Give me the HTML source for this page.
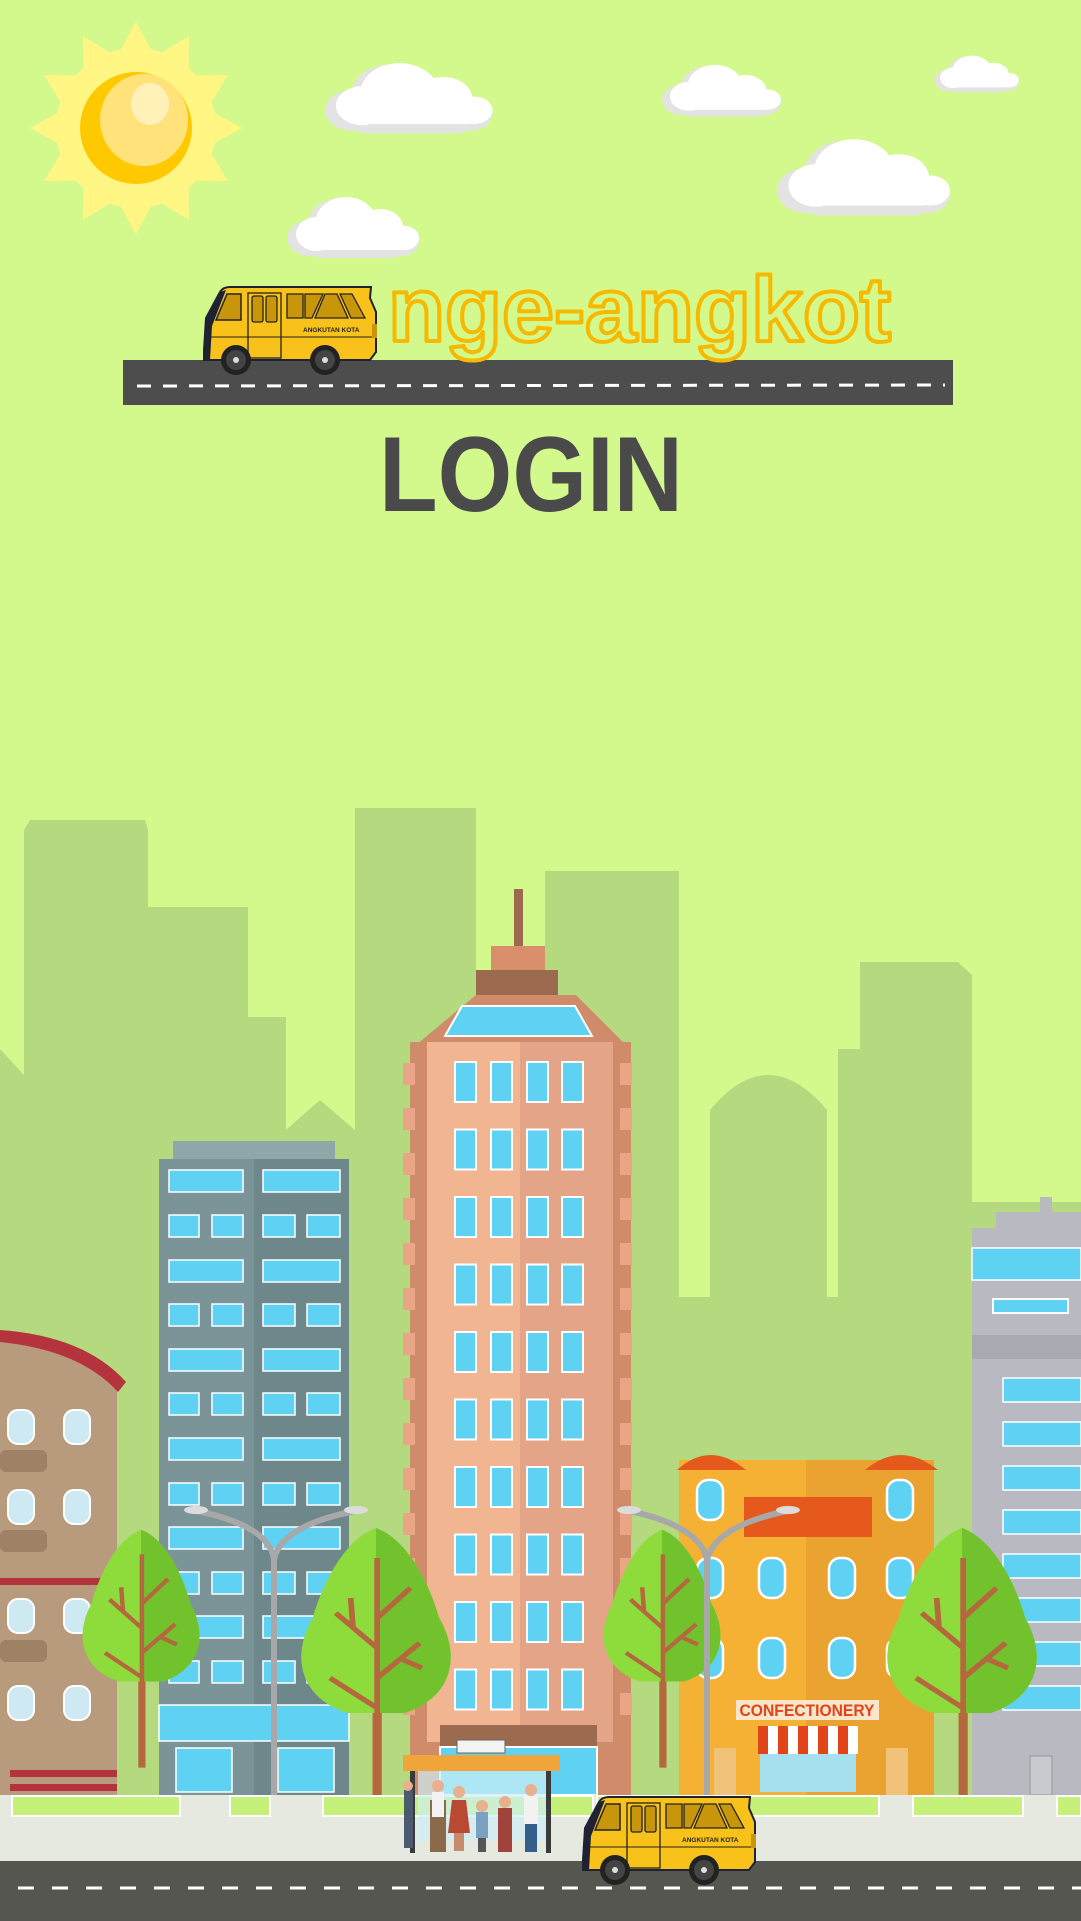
<!DOCTYPE html>
<html><head><meta charset="utf-8"><style>
html,body{margin:0;padding:0;background:#d3f98d;}
svg{display:block}
</style></head><body>
<svg width="1081" height="1921" viewBox="0 0 1081 1921" xmlns="http://www.w3.org/2000/svg">
<defs>
<g id="van">
  <path d="M4,64 L6,32 L20,6 Q23,1 30,1 L171,1 L170,12 L176,26 L176,66 L170,74 L4,74 Z" fill="#f8c21b" stroke="#1f2233" stroke-width="2"/>
  <path d="M4,64 L6,32 L20,6 L26,4 L12,40 L10,74 L4,74Z" fill="#1f2233"/>
  <path d="M16,34 L27,8 L41,8 L41,34 Z" fill="#c7960a" stroke="#222" stroke-width="1.5"/>
  <rect x="48" y="7" width="33" height="65" fill="none" stroke="#222" stroke-width="1.3"/>
  <rect x="52" y="10" width="11" height="26" rx="2" fill="#c7960a" stroke="#222" stroke-width="1.3"/>
  <rect x="66" y="10" width="11" height="26" rx="2" fill="#c7960a" stroke="#222" stroke-width="1.3"/>
  <path d="M87,8 L103,8 L103,32 L87,32Z M105,8 L123,8 L112,32 L105,32Z M125,8 L137,8 L148,32 L115,32Z M140,8 L152,8 L165,32 L151,32Z" fill="#c7960a" stroke="#222" stroke-width="1.3"/>
  <text x="103" y="46" font-family="Liberation Sans, sans-serif" font-size="6.5" font-weight="bold" fill="#222">ANGKUTAN KOTA</text>
  <line x1="6" y1="51" x2="172" y2="51" stroke="#222" stroke-width="1"/>
  <rect x="172" y="38" width="5" height="14" fill="#c7960a"/>
  <circle cx="36" cy="74" r="15" fill="#222"/><circle cx="36" cy="74" r="10" fill="#444"/><circle cx="36" cy="74" r="3" fill="#ddd"/>
  <circle cx="125" cy="74" r="15" fill="#222"/><circle cx="125" cy="74" r="10" fill="#444"/><circle cx="125" cy="74" r="3" fill="#ddd"/>
</g>
<g id="cloud">
  <g fill="#e3e3e3"><circle cx="20" cy="42" r="18"/><circle cx="45" cy="28" r="26"/><circle cx="75" cy="36" r="20"/><circle cx="95" cy="45" r="15"/><rect x="18" y="40" width="80" height="22" rx="11"/></g>
  <g fill="#fff"><circle cx="26" cy="38" r="17"/><circle cx="50" cy="26" r="25"/><circle cx="78" cy="32" r="19"/><circle cx="98" cy="42" r="12"/><rect x="24" y="36" width="78" height="18" rx="9"/></g>
</g>
<g id="tree">
  <path d="M0,-110 C25,-100 45,-60 55,-20 C75,20 65,60 25,75 L-25,75 C-65,60 -75,20 -55,-20 C-45,-60 -25,-100 0,-110Z" fill="#8ddc3c"/>
  <path d="M0,-110 C25,-100 45,-60 55,-20 C75,20 65,60 25,75 L0,75Z" fill="#72c22e"/>
  <path d="M-3,75 L-3,180 L5,180 L5,75 Z" fill="#b5683e"/>
  <path d="M1,-80 L1,130 M1,10 L-35,-25 M1,40 L38,5 M1,-20 L30,-50 M1,70 L-40,40 M-20,-10 L-22,-40 M20,20 L40,30" stroke="#b5683e" stroke-width="5" fill="none"/>
</g>
</defs>

<rect width="1081" height="1921" fill="#d3f98d"/>

<g transform="translate(136,128)">
  <g fill="#fff683">
    <circle r="80"/>
    <g id="ray"><path d="M-20,-70 L0,-106 L20,-70Z"/></g>
    <use href="#ray" transform="rotate(30)"/><use href="#ray" transform="rotate(60)"/><use href="#ray" transform="rotate(90)"/>
    <use href="#ray" transform="rotate(120)"/><use href="#ray" transform="rotate(150)"/><use href="#ray" transform="rotate(180)"/>
    <use href="#ray" transform="rotate(210)"/><use href="#ray" transform="rotate(240)"/><use href="#ray" transform="rotate(270)"/>
    <use href="#ray" transform="rotate(300)"/><use href="#ray" transform="rotate(330)"/>
  </g>
  <ellipse rx="56" ry="56" fill="#ffc900"/>
  <ellipse cx="8" cy="-8" rx="44" ry="46" fill="#ffe27a"/>
  <ellipse cx="14" cy="-24" rx="19" ry="21" fill="#fff1b8"/>
</g>

<use href="#cloud" transform="translate(322,62) scale(1.55,1.15)"/>
<use href="#cloud" transform="translate(660,64) scale(1.1,0.85)"/>
<use href="#cloud" transform="translate(933,55) scale(0.78,0.6)"/>
<use href="#cloud" transform="translate(774,138) scale(1.6,1.25)"/>
<use href="#cloud" transform="translate(285,196) scale(1.22,1.0)"/>

<rect x="123" y="360" width="830" height="45" fill="#4d4d4d"/>
<line x1="137" y1="386" x2="945" y2="385" stroke="#fff" stroke-width="3" stroke-dasharray="14,12"/>
<use href="#van" transform="translate(200,286)"/>
<text x="388" y="341" font-family="Liberation Sans, sans-serif" font-size="92" font-weight="bold" fill="none" stroke="#f7b900" stroke-width="4" stroke-linejoin="round" textLength="503" lengthAdjust="spacingAndGlyphs">nge-angkot</text>
<text x="379" y="511" font-family="Liberation Sans, sans-serif" font-size="107" font-weight="bold" fill="#4a4a4a" textLength="304" lengthAdjust="spacingAndGlyphs">LOGIN</text>

<g fill="#b5d97e">
  <path d="M0,1049 L24,1075 L24,830 L30,820 L145,820 L148,830 L148,907 L248,907 L248,1017 L286,1017 L286,1130 L320,1100 L355,1130 L355,808 L476,808 L476,1000 L545,1000 L545,871 L679,871 L679,1297 L710,1297 L710,1110 Q768,1040 827,1110 L827,1297 L838,1297 L838,1049 L860,1049 L860,962 L958,962 L972,975 L972,1202 L1081,1202 L1081,1800 L0,1800Z"/>
</g>

<path d="M0,1333 Q80,1340 122,1383 L117,1390 L117,1795 L0,1795Z" fill="#b89a7c"/>
<path d="M0,1330 Q85,1336 126,1382 L118,1392 Q80,1350 0,1342Z" fill="#b5333c"/>
<rect x="0" y="1578" width="117" height="7" fill="#b5333c"/>
<rect x="10" y="1770" width="107" height="7" fill="#b5333c"/><rect x="10" y="1784" width="107" height="7" fill="#b5333c"/>
<g fill="#cfe9f3" stroke="#fff" stroke-width="2">
  <rect x="8" y="1410" width="26" height="34" rx="10"/><rect x="64" y="1410" width="26" height="34" rx="10"/>
  <rect x="8" y="1490" width="26" height="34" rx="10"/><rect x="64" y="1490" width="26" height="34" rx="10"/>
  <rect x="8" y="1599" width="26" height="34" rx="10"/><rect x="64" y="1599" width="26" height="34" rx="10"/>
  <rect x="8" y="1686" width="26" height="34" rx="10"/><rect x="64" y="1686" width="26" height="34" rx="10"/>
</g>
<g fill="#9e8266"><rect x="0" y="1450" width="47" height="22" rx="6"/><rect x="0" y="1530" width="47" height="22" rx="6"/><rect x="0" y="1640" width="47" height="22" rx="6"/></g>

<rect x="173" y="1141" width="162" height="20" fill="#8ea7a9"/>
<rect x="159" y="1159" width="95" height="636" fill="#7b9498"/>
<rect x="254" y="1159" width="95" height="636" fill="#6e878b"/>
<g fill="#5fd2f4" stroke="#fff" stroke-width="1.5">
  <rect x="169" y="1170" width="74" height="22"/><rect x="263" y="1170" width="77" height="22"/>
  <rect x="169" y="1215" width="30" height="22"/><rect x="212" y="1215" width="31" height="22"/><rect x="263" y="1215" width="32" height="22"/><rect x="307" y="1215" width="33" height="22"/>
  <rect x="169" y="1260" width="74" height="22"/><rect x="263" y="1260" width="77" height="22"/>
  <rect x="169" y="1304" width="30" height="22"/><rect x="212" y="1304" width="31" height="22"/><rect x="263" y="1304" width="32" height="22"/><rect x="307" y="1304" width="33" height="22"/>
  <rect x="169" y="1349" width="74" height="22"/><rect x="263" y="1349" width="77" height="22"/>
  <rect x="169" y="1393" width="30" height="22"/><rect x="212" y="1393" width="31" height="22"/><rect x="263" y="1393" width="32" height="22"/><rect x="307" y="1393" width="33" height="22"/>
  <rect x="169" y="1438" width="74" height="22"/><rect x="263" y="1438" width="77" height="22"/>
  <rect x="169" y="1483" width="30" height="22"/><rect x="212" y="1483" width="31" height="22"/><rect x="263" y="1483" width="32" height="22"/><rect x="307" y="1483" width="33" height="22"/>
  <rect x="169" y="1527" width="74" height="22"/><rect x="263" y="1527" width="77" height="22"/>
  <rect x="169" y="1572" width="30" height="22"/><rect x="212" y="1572" width="31" height="22"/><rect x="263" y="1572" width="32" height="22"/><rect x="307" y="1572" width="33" height="22"/>
  <rect x="169" y="1616" width="74" height="22"/><rect x="263" y="1616" width="77" height="22"/>
  <rect x="169" y="1661" width="30" height="22"/><rect x="212" y="1661" width="31" height="22"/><rect x="263" y="1661" width="32" height="22"/><rect x="307" y="1661" width="33" height="22"/>
  <rect x="159" y="1705" width="190" height="36"/>
  <rect x="176" y="1748" width="56" height="44"/><rect x="278" y="1748" width="56" height="44"/>
</g>

<rect x="514" y="889" width="9" height="60" fill="#9c6b4f"/>
<rect x="491" y="946" width="54" height="26" fill="#d98f6b"/>
<rect x="476" y="970" width="82" height="25" fill="#9c6b4f"/>
<path d="M476,995 L576,995 L631,1050 L410,1050 Z" fill="#d08b6a"/>
<path d="M445,1036 L462,1006 L575,1006 L592,1036Z" fill="#5fd2f4" stroke="#fff" stroke-width="2"/>
<rect x="410" y="1042" width="221" height="753" fill="#d08b6a"/>
<rect x="427" y="1042" width="93" height="700" fill="#f2b592"/>
<rect x="520" y="1042" width="93" height="700" fill="#e3a487"/>
<g fill="#eaa587"><rect x="403" y="1063" width="12" height="22"/><rect x="403" y="1108" width="12" height="22"/><rect x="403" y="1153" width="12" height="22"/><rect x="403" y="1198" width="12" height="22"/><rect x="403" y="1243" width="12" height="22"/><rect x="403" y="1288" width="12" height="22"/><rect x="403" y="1333" width="12" height="22"/><rect x="403" y="1378" width="12" height="22"/><rect x="403" y="1423" width="12" height="22"/><rect x="403" y="1468" width="12" height="22"/><rect x="403" y="1513" width="12" height="22"/><rect x="403" y="1558" width="12" height="22"/><rect x="403" y="1603" width="12" height="22"/><rect x="403" y="1648" width="12" height="22"/><rect x="403" y="1693" width="12" height="22"/>
<rect x="620" y="1063" width="12" height="22"/><rect x="620" y="1108" width="12" height="22"/><rect x="620" y="1153" width="12" height="22"/><rect x="620" y="1198" width="12" height="22"/><rect x="620" y="1243" width="12" height="22"/><rect x="620" y="1288" width="12" height="22"/><rect x="620" y="1333" width="12" height="22"/><rect x="620" y="1378" width="12" height="22"/><rect x="620" y="1423" width="12" height="22"/><rect x="620" y="1468" width="12" height="22"/><rect x="620" y="1513" width="12" height="22"/><rect x="620" y="1558" width="12" height="22"/><rect x="620" y="1603" width="12" height="22"/><rect x="620" y="1648" width="12" height="22"/><rect x="620" y="1693" width="12" height="22"/></g>
<g id="wrow" fill="#5fd2f4" stroke="#fff" stroke-width="2">
  <rect x="455" y="1062" width="21" height="40"/><rect x="491" y="1062" width="21" height="40"/><rect x="527" y="1062" width="21" height="40"/><rect x="562" y="1062" width="21" height="40"/>
</g>
<use href="#wrow" y="67.5"/><use href="#wrow" y="135"/><use href="#wrow" y="202.5"/><use href="#wrow" y="270"/><use href="#wrow" y="337.5"/><use href="#wrow" y="405"/><use href="#wrow" y="472.5"/><use href="#wrow" y="540"/><use href="#wrow" y="607.5"/>
<rect x="440" y="1725" width="157" height="22" fill="#9c6b4f"/>
<rect x="440" y="1747" width="157" height="48" fill="#5fd2f4" stroke="#fff" stroke-width="2"/>

<rect x="679" y="1460" width="255" height="335" fill="#f5b134"/>
<rect x="806" y="1460" width="128" height="335" fill="#eaa230"/>
<rect x="744" y="1497" width="128" height="40" fill="#e55a1c"/>
<path d="M677,1470 Q710,1440 746,1470 Z" fill="#e55a1c"/>
<path d="M865,1470 Q900,1440 938,1470 Z" fill="#e55a1c"/>
<g fill="#5fd2f4" stroke="#fff" stroke-width="2.5">
  <rect x="697" y="1480" width="26" height="40" rx="11"/><rect x="887" y="1480" width="26" height="40" rx="11"/>
  <rect x="697" y="1558" width="26" height="40" rx="11"/><rect x="759" y="1558" width="26" height="40" rx="11"/><rect x="829" y="1558" width="26" height="40" rx="11"/><rect x="887" y="1558" width="26" height="40" rx="11"/>
  <rect x="697" y="1638" width="26" height="40" rx="11"/><rect x="759" y="1638" width="26" height="40" rx="11"/><rect x="829" y="1638" width="26" height="40" rx="11"/><rect x="887" y="1638" width="26" height="40" rx="11"/>
</g>
<rect x="736" y="1700" width="143" height="20" fill="#fbe6cc"/>
<text x="807" y="1716" text-anchor="middle" font-family="Liberation Sans, sans-serif" font-weight="bold" font-size="17" fill="#e04418" textLength="135" lengthAdjust="spacingAndGlyphs">CONFECTIONERY</text>
<rect x="758" y="1726" width="100" height="28" fill="#fff"/>
<g fill="#e04418"><rect x="758" y="1726" width="10" height="28"/><rect x="778" y="1726" width="10" height="28"/><rect x="798" y="1726" width="10" height="28"/><rect x="818" y="1726" width="10" height="28"/><rect x="838" y="1726" width="10" height="28"/></g>
<rect x="760" y="1754" width="96" height="38" fill="#a6e0ee"/>
<rect x="714" y="1748" width="22" height="47" fill="#f0c27a"/><rect x="886" y="1748" width="22" height="47" fill="#f0c27a"/>

<rect x="1040" y="1197" width="12" height="15" fill="#b9b9c2"/>
<rect x="996" y="1212" width="85" height="16" fill="#b9b9c2"/>
<rect x="972" y="1228" width="109" height="567" fill="#b9b9c2"/>
<rect x="972" y="1248" width="109" height="32" fill="#5fd2f4" stroke="#fff" stroke-width="1.5"/>
<rect x="993" y="1299" width="75" height="14" fill="#5fd2f4" stroke="#fff" stroke-width="2"/>
<rect x="972" y="1335" width="109" height="24" fill="#a9a9b2"/>
<g fill="#5fd2f4" stroke="#fff" stroke-width="1.5">
  <rect x="1003" y="1378" width="78" height="24"/><rect x="1003" y="1422" width="78" height="24"/><rect x="1003" y="1466" width="78" height="24"/><rect x="1003" y="1510" width="78" height="24"/><rect x="1003" y="1554" width="78" height="24"/><rect x="1003" y="1598" width="78" height="24"/><rect x="1003" y="1642" width="78" height="24"/><rect x="1003" y="1686" width="78" height="24"/>
</g>
<rect x="1030" y="1756" width="22" height="39" fill="#c9c9d0" stroke="#999" stroke-width="1"/>

<use href="#tree" transform="translate(141,1620) scale(0.9,0.82)"/>
<use href="#tree" transform="translate(376,1638) scale(1.15,1.0)"/>
<use href="#tree" transform="translate(662,1620) scale(0.9,0.82)"/>
<use href="#tree" transform="translate(962,1638) scale(1.15,1.0)"/>

<g stroke="#a8a8a8" fill="none" stroke-width="6">
  <path d="M274,1857 L274,1560 Q270,1525 192,1510"/><path d="M274,1560 Q280,1525 360,1510"/>
  <path d="M707,1800 L707,1560 Q700,1525 625,1510"/><path d="M707,1560 Q715,1525 792,1510"/>
</g>
<g fill="#dcdcdc"><ellipse cx="196" cy="1510" rx="12" ry="4"/><ellipse cx="356" cy="1510" rx="12" ry="4"/><ellipse cx="629" cy="1510" rx="12" ry="4"/><ellipse cx="788" cy="1510" rx="12" ry="4"/></g>

<rect x="0" y="1795" width="1081" height="66" fill="#e6e9e0"/>
<g fill="#c5f07a" stroke="#fff" stroke-width="2">
  <rect x="12" y="1796" width="168" height="20"/><rect x="230" y="1796" width="40" height="20"/><rect x="323" y="1796" width="270" height="20"/>
  <rect x="597" y="1796" width="282" height="20"/><rect x="913" y="1796" width="110" height="20"/><rect x="1057" y="1796" width="24" height="20"/>
</g>
<rect x="0" y="1861" width="1081" height="60" fill="#555650"/>
<line x1="18" y1="1888" x2="1081" y2="1888" stroke="#fff" stroke-width="3" stroke-dasharray="16,18"/>

<rect x="457" y="1740" width="48" height="13" fill="#f3f3f3" stroke="#666" stroke-width="1"/>
<rect x="403" y="1755" width="157" height="16" fill="#f0a53a"/>
<rect x="418" y="1771" width="130" height="70" fill="#cfeef5" opacity="0.7"/>
<g fill="#3a3a3a"><rect x="410" y="1771" width="5" height="82"/><rect x="546" y="1771" width="5" height="82"/></g>
<g>
  <rect x="404" y="1790" width="9" height="58" fill="#4b5a6e"/><circle cx="408" cy="1786" r="5" fill="#e8b08e"/>
  <rect x="430" y="1800" width="16" height="52" fill="#8b6a4c"/><rect x="432" y="1792" width="12" height="25" fill="#f2f2f2"/><circle cx="438" cy="1786" r="6" fill="#e8b08e"/>
  <path d="M452,1800 L466,1800 L470,1833 L448,1833Z" fill="#b84a33"/><rect x="454" y="1833" width="10" height="18" fill="#c78a6c"/><circle cx="459" cy="1792" r="6" fill="#e8b08e"/>
  <rect x="476" y="1812" width="12" height="26" fill="#7aa0c2"/><rect x="478" y="1838" width="8" height="14" fill="#555"/><circle cx="482" cy="1806" r="6" fill="#e8b08e"/>
  <rect x="498" y="1808" width="14" height="44" fill="#a0433a"/><circle cx="505" cy="1802" r="6" fill="#e8b08e"/>
  <rect x="524" y="1796" width="14" height="28" fill="#f2f2f2"/><rect x="525" y="1824" width="12" height="28" fill="#355e8a"/><circle cx="531" cy="1790" r="6" fill="#e8b08e"/>
</g>

<use href="#van" transform="translate(579,1796)"/>
</svg>
</body></html>
